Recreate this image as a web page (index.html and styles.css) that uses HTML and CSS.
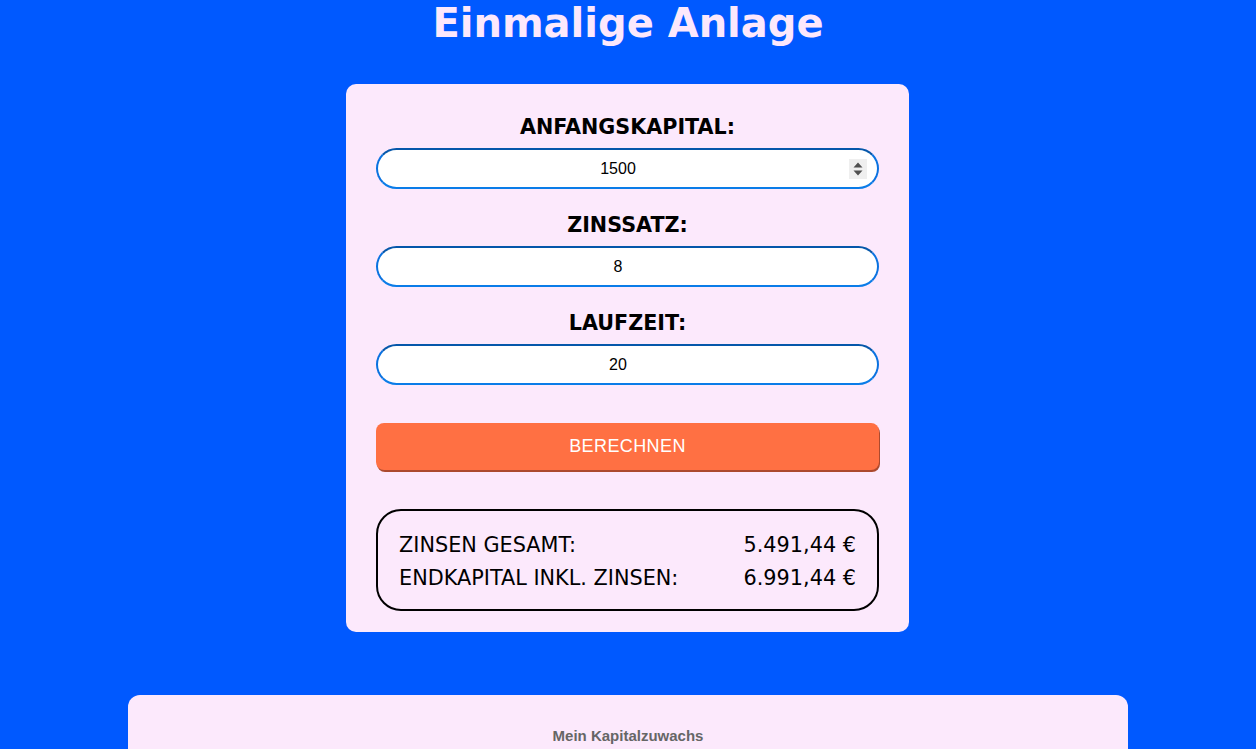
FILE: index.html
```html
<!DOCTYPE html>
<html lang="de">
<head>
<meta charset="utf-8">
<title>Einmalige Anlage</title>
<link rel="stylesheet" href="styles.css">
</head>
<body>
<h1 class="title">Einmalige Anlage</h1>
<main class="card">
  <div class="field">
    <label class="label" for="kapital">Anfangskapital:</label>
    <div class="input-wrap">
      <input class="input" id="kapital" type="number" value="1500">
      <span class="spinner" aria-hidden="true">
        <svg width="10" height="14" viewBox="0 0 10 14"><path d="M5 0.5 L9.5 5.5 L0.5 5.5 Z M0.5 8.5 L9.5 8.5 L5 13.5 Z" fill="#505050"/></svg>
      </span>
    </div>
  </div>
  <div class="field">
    <label class="label" for="zins">Zinssatz:</label>
    <div class="input-wrap">
      <input class="input" id="zins" type="number" value="8">
    </div>
  </div>
  <div class="field field-last">
    <label class="label" for="laufzeit">Laufzeit:</label>
    <div class="input-wrap">
      <input class="input" id="laufzeit" type="number" value="20">
    </div>
  </div>
  <button class="btn" type="button">BERECHNEN</button>
  <div class="results">
    <div class="row"><span>ZINSEN GESAMT:</span><span>5.491,44 €</span></div>
    <div class="row"><span>ENDKAPITAL INKL. ZINSEN:</span><span>6.991,44 €</span></div>
  </div>
</main>
<section class="chart-card">
  <div class="chart-title">Mein Kapitalzuwachs</div>
</section>
</body>
</html>
```
FILE: styles.css
```css
html, body {
  margin: 0;
  padding: 0;
}
body {
  background: #0059ff;
  font-family: "DejaVu Sans", Verdana, sans-serif;
  color: #000;
  height: 749px;
  overflow: hidden;
}
.title {
  margin: 0;
  padding-top: 0;
  line-height: 47px;
  text-align: center;
  font-size: 40px;
  font-weight: bold;
  color: #fce8fc;
}
.card {
  width: 503px;
  margin: 37px 0 0 calc(50% - 282px);
  padding: 31px 30px 21px;
  background: #fce9fc;
  border-radius: 10px;
  display: flex;
  flex-direction: column;
}
.field {
  display: flex;
  flex-direction: column;
  align-items: stretch;
  margin-bottom: 24px;
}
.field-last {
  margin-bottom: 38px;
}
.label {
  text-align: center;
  font-size: 20.7px;
  line-height: 25px;
  font-weight: bold;
  text-transform: uppercase;
  margin-bottom: 8px;
}
.input-wrap {
  position: relative;
}
.input {
  display: block;
  box-sizing: border-box;
  height: 41px;
  width: 100%;
  border: 2px solid #0a72e0;
  border-top-color: #0557aa;
  border-bottom-color: #0a7ce8;
  border-radius: 21px;
  background: #fff;
  text-align: center;
  font-family: "Liberation Sans", Arial, sans-serif;
  font-size: 16px;
  color: #000;
  padding: 0 31px 0 12px;
  outline: none;
  -moz-appearance: textfield;
}
.input::-webkit-inner-spin-button,
.input::-webkit-outer-spin-button {
  -webkit-appearance: none;
  margin: 0;
}
.spinner {
  position: absolute;
  top: 11px;
  right: 12px;
  width: 18px;
  height: 20px;
  background: #efefef;
  display: flex;
  align-items: center;
  justify-content: center;
}
.spinner svg {
  display: block;
}
.btn {
  height: 47px;
  border: none;
  border-radius: 8px;
  background: #ff7043;
  color: #fff;
  font-family: "Liberation Sans", Arial, sans-serif;
  font-size: 18px;
  letter-spacing: 0.4px;
  box-shadow: 1px 2px 0 #ac4a2e;
  margin-bottom: 39px;
  cursor: pointer;
}
.results {
  border: 2px solid #000;
  border-radius: 25px;
  padding: 18px 21px 14px;
}
.row {
  display: flex;
  justify-content: space-between;
  font-size: 20.8px;
  line-height: 33px;
}
.chart-card {
  width: 1000px;
  height: 120px;
  margin: 63px auto 0;
  background: #fce9fc;
  border-radius: 12px 12px 0 0;
  padding-top: 32px;
  box-sizing: border-box;
}
.chart-title {
  text-align: center;
  font-family: "Liberation Sans", Arial, sans-serif;
  font-weight: bold;
  font-size: 15px;
  color: #666;
}
```
